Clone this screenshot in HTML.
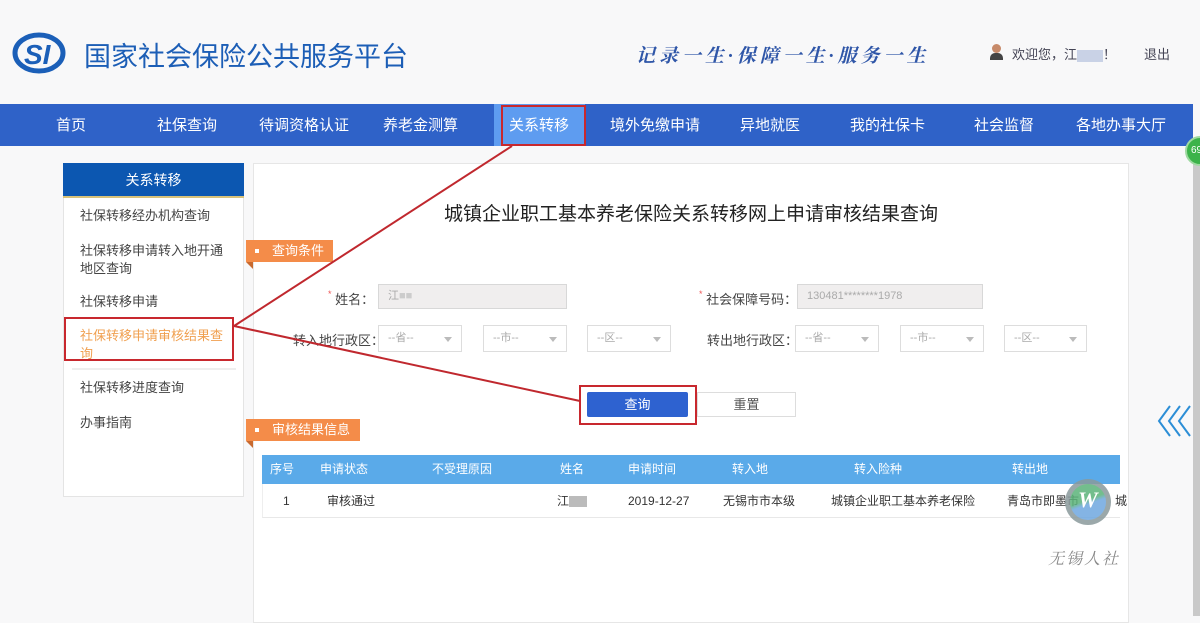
<!DOCTYPE html>
<html><head><meta charset="utf-8"><style>
*{margin:0;padding:0;box-sizing:border-box}
body{width:1200px;height:616px;overflow:hidden;background:#f8f8f9;font-family:"Liberation Sans","Noto Sans CJK SC",sans-serif;position:relative;color:#333}
.a{position:absolute}
.nav{left:0;top:104px;width:1193px;height:42px;background:#2f62c8}
.nav span{position:absolute;top:1px;line-height:42px;color:#fff;font-size:15px}
.sb{left:63px;top:163px;width:181px;height:334px;background:#fff;border:1px solid #e4e4e4}
.sbh{left:63px;top:163px;width:181px;height:35px;background:#0c57b1;border-bottom:2px solid #d8c27a;color:#fff;font-size:14px;text-align:center;line-height:34px}
.si{left:80px;font-size:13px;color:#444;line-height:18px}
.main{left:253px;top:163px;width:876px;height:460px;background:#fff;border:1px solid #e6e6e6}
.tag{background:#f48c49;color:#fff;font-size:13px;height:22px;line-height:22px;padding-left:26px}
.tag:before{content:"";position:absolute;left:9px;top:9px;width:4px;height:4px;background:#fff}
.tag:after{content:"";position:absolute;left:0;top:22px;border-top:7px solid #c86a30;border-left:7px solid transparent}
.lbl{font-size:13px;color:#444}
.inp{height:25px;border:1px solid #d8d8d8;background:#f0eeee;font-size:11px;color:#aaa;line-height:23px;padding-left:9px}
.sel{height:27px;border:1px solid #ddd;background:#fff;font-size:11px;color:#aaa;line-height:25px;padding-left:9px}
.sel:after{content:"";position:absolute;right:9px;top:11px;border-top:5px solid #bbb;border-left:4px solid transparent;border-right:4px solid transparent}
.th span,.tr span{position:absolute;top:0;font-size:12px}
.th span{color:#fff;line-height:28px}
.tr span{color:#333;line-height:34px}
.red{border:2px solid #c8282e}
</style></head><body>
<svg class="a" style="left:12px;top:31px" width="56" height="44" viewBox="0 0 56 44"><ellipse cx="27" cy="22" rx="24" ry="18" fill="none" stroke="#1b5fb8" stroke-width="5"/><text x="12" y="33" font-family="Liberation Sans" font-weight="bold" font-style="italic" font-size="28" fill="#1b5fb8">SI</text></svg>
<div class="a" style="left:84px;top:35px;font-size:27px;color:#1c5eb6">国家社会保险公共服务平台</div>
<div class="a" style="left:636px;top:41px;font-size:19px;color:#2f56a8;font-family:'Liberation Serif','Noto Serif CJK SC',serif;font-style:italic;letter-spacing:4px;font-weight:bold">记录一生·保障一生·服务一生</div>
<div class="a" style="left:990px;top:44px;width:12px;height:16px"><div class="a" style="left:2px;top:0;width:9px;height:9px;border-radius:50%;background:#c78a6a"></div><div class="a" style="left:0;top:9px;width:13px;height:7px;border-radius:5px 5px 0 0;background:#444"></div></div>
<div class="a" style="left:1012px;top:44px;font-size:13px;color:#445">欢迎您，江<span style="display:inline-block;width:26px;height:12px;background:#c9d2e6;vertical-align:middle"></span>！</div>
<div class="a" style="left:1144px;top:44px;font-size:13px;color:#445">退出</div>
<div class="a nav">
<span style="left:56px">首页</span><span style="left:157px">社保查询</span><span style="left:259px">待调资格认证</span><span style="left:383px">养老金测算</span>
<div class="a" style="left:494px;top:0;width:91px;height:42px;background:#5e9cf0"></div>
<span style="left:509px">关系转移</span><span style="left:610px">境外免缴申请</span><span style="left:740px">异地就医</span><span style="left:850px">我的社保卡</span><span style="left:974px">社会监督</span><span style="left:1076px">各地办事大厅</span>
</div>
<div class="a red" style="left:501px;top:105px;width:85px;height:41px"></div>
<div class="a" style="left:1193px;top:146px;width:7px;height:470px;background:#c9c9c9"></div>
<div class="a" style="left:1185px;top:136px;width:30px;height:30px;border-radius:50%;background:#3cb34a;border:2px solid #9ed9a0;color:#fff;font-size:10px;line-height:26px;padding-left:4px">69</div>
<div class="a sb"></div>
<div class="a sbh">关系转移</div>
<div class="a si" style="top:207px">社保转移经办机构查询</div>
<div class="a si" style="top:242px">社保转移申请转入地开通<br>地区查询</div>
<div class="a si" style="top:293px">社保转移申请</div>
<div class="a si" style="top:327px;color:#f0a050;width:150px">社保转移申请审核结果查询</div>
<div class="a" style="left:72px;top:368px;width:164px;height:2px;background:#eee"></div>
<div class="a si" style="top:379px">社保转移进度查询</div>
<div class="a si" style="top:414px">办事指南</div>
<div class="a red" style="left:64px;top:317px;width:170px;height:44px"></div>
<div class="a main"></div>
<div class="a" style="left:253px;top:199px;width:876px;text-align:center;font-size:19px;color:#222">城镇企业职工基本养老保险关系转移网上申请审核结果查询</div>
<div class="a tag" style="left:246px;top:240px;width:87px">查询条件</div>
<div class="a lbl" style="left:328px;top:289px"><span style="color:#e55;font-size:9px;vertical-align:top">*</span> 姓名：</div>
<div class="a inp" style="left:378px;top:284px;width:189px">江<span style="color:#ccc">■■</span></div>
<div class="a lbl" style="left:699px;top:289px"><span style="color:#e55;font-size:9px;vertical-align:top">*</span> 社会保障号码：</div>
<div class="a inp" style="left:797px;top:284px;width:186px">130481********1978</div>
<div class="a lbl" style="left:293px;top:330px">转入地行政区：</div>
<div class="a sel" style="left:378px;top:325px;width:84px">--省--</div>
<div class="a sel" style="left:483px;top:325px;width:84px">--市--</div>
<div class="a sel" style="left:587px;top:325px;width:84px">--区--</div>
<div class="a lbl" style="left:707px;top:330px">转出地行政区：</div>
<div class="a sel" style="left:795px;top:325px;width:84px">--省--</div>
<div class="a sel" style="left:900px;top:325px;width:84px">--市--</div>
<div class="a sel" style="left:1004px;top:325px;width:83px">--区--</div>
<div class="a" style="left:587px;top:392px;width:101px;height:25px;background:#2e62d0;border-radius:2px;color:#fff;font-size:13px;text-align:center;line-height:25px">查询</div>
<div class="a" style="left:697px;top:392px;width:99px;height:25px;background:#fff;border:1px solid #ddd;font-size:13px;color:#555;text-align:center;line-height:23px">重置</div>
<div class="a red" style="left:579px;top:385px;width:118px;height:40px"></div>
<div class="a tag" style="left:246px;top:419px;width:114px">审核结果信息</div>
<div class="a th" style="left:262px;top:455px;width:858px;height:29px;background:#5aaae9">
<span style="left:8px">序号</span><span style="left:58px">申请状态</span><span style="left:170px">不受理原因</span><span style="left:298px">姓名</span><span style="left:366px">申请时间</span><span style="left:470px">转入地</span><span style="left:592px">转入险种</span><span style="left:750px">转出地</span></div>
<div class="a tr" style="left:262px;top:484px;width:858px;height:34px;border-bottom:1px solid #e8e8e8;border-left:1px solid #eee">
<span style="left:20px">1</span><span style="left:64px">审核通过</span><span style="left:294px">江<span style="position:static;display:inline-block;width:18px;height:11px;background:#bbb;vertical-align:middle"></span></span><span style="left:365px">2019-12-27</span><span style="left:460px">无锡市市本级</span><span style="left:568px">城镇企业职工基本养老保险</span><span style="left:744px">青岛市即墨市</span><span style="left:852px">城</span></div>
<div class="a" style="left:1065px;top:479px;width:46px;height:46px;border-radius:50%;background:#8a9a9c;opacity:.85"><div class="a" style="left:5px;top:5px;width:36px;height:36px;border-radius:50%;background:linear-gradient(160deg,#5bb37a 45%,#6fa8e0 55%)"></div><div class="a" style="left:13px;top:8px;color:#fff;font-weight:bold;font-style:italic;font-size:22px;font-family:'Liberation Serif',serif">W</div></div>
<div class="a" style="left:1048px;top:546px;font-size:16px;color:#888;font-style:italic;font-family:'Liberation Serif','Noto Serif CJK SC',serif;letter-spacing:2px">无锡人社</div>
<svg class="a" style="left:1156px;top:404px" width="38" height="34" viewBox="0 0 38 34"><g fill="none" stroke="#2c8ed6" stroke-width="2"><path d="M14 2 L3 17 L14 32"/><path d="M24 2 L13 17 L24 32"/><path d="M34 2 L23 17 L34 32"/></g></svg>
<svg class="a" style="left:0;top:0" width="1200" height="616"><g stroke="#c0282e" stroke-width="2" fill="none"><line x1="512" y1="146" x2="234" y2="326"/><line x1="234" y1="326" x2="580" y2="401"/></g></svg>
</body></html>
